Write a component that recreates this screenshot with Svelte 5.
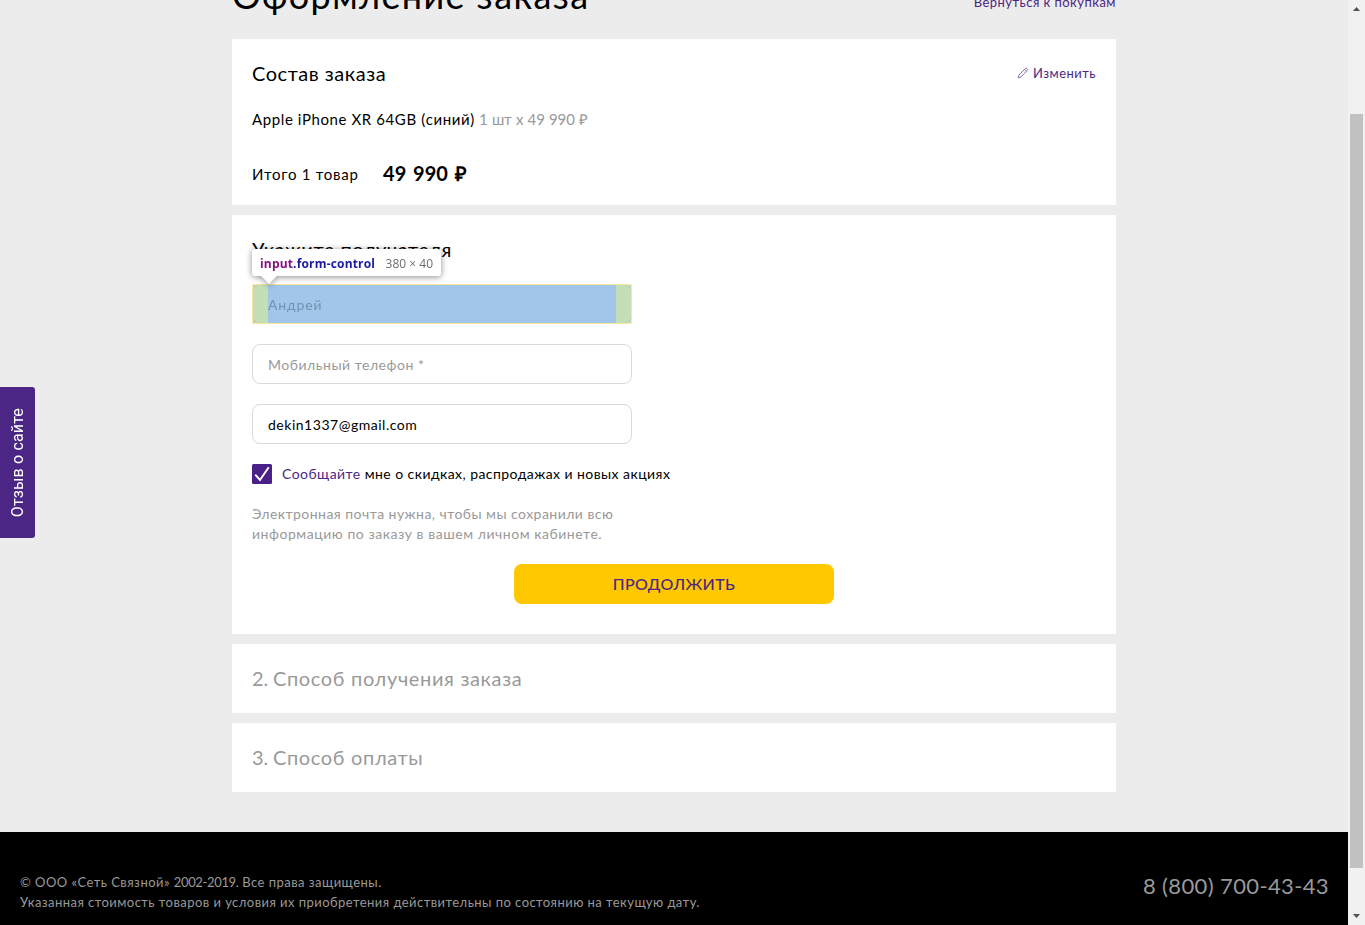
<script>
  const steps = [
    { number: '2.', title: 'Способ получения заказа' },
    { number: '3.', title: 'Способ оплаты' }
  ];
</script>

<div class="window">
  <div class="page">
    <header>
      <h1>Оформление заказа</h1>
      <a class="back" href="#cart">Вернуться к покупкам</a>
    </header>

    <main>
      <section class="card order">
        <div class="head">
          <h2>Состав заказа</h2>
          <a class="edit" href="#edit">
            <svg width="12" height="12" viewBox="0 0 12 12" fill="none" stroke="#6a4a9c" stroke-width=".8" stroke-linejoin="round">
              <path d="M1.2 10.8 1.9 8.1 8.4 1.5Q9.2.8 10.1 1.6 11 2.6 10.3 3.5L3.8 10.1ZM7.4 2.5 9.3 4.5" />
            </svg>
            <span>Изменить</span>
          </a>
        </div>
        <div class="product"><span class="name">Apple iPhone XR 64GB (синий)</span><span class="qty">1 шт x 49 990 ₽</span></div>
        <div class="total"><span class="count">Итого 1 товар</span><b>49 990 ₽</b></div>
      </section>

      <section class="card recipient">
        <h2>Укажите получателя</h2>
        <div class="fields">
          <div class="field picked">
            <span class="first">Андрей</span>
            <div class="highlight"></div>
            <div class="tip"><b class="tag">input</b><b class="cls">.form-control</b><span class="size">380 × 40</span></div>
          </div>
          <div class="field hint"><span>Мобильный телефон *</span></div>
          <div class="field"><span>dekin1337@gmail.com</span></div>
        </div>
        <div class="agree">
          <svg width="20" height="20" viewBox="0 0 20 20">
            <rect width="20" height="20" rx="1.5" fill="#4a1f87" />
            <path d="M3.2 10.7 8 16 16.7 3.2" fill="none" stroke="#fff" stroke-width="2" />
          </svg>
          <span class="say">Сообщайте</span><span class="about">мне о скидках, распродажах и новых акциях</span>
        </div>
        <p class="note">Электронная почта нужна, чтобы мы сохранили всю<br /><span>информацию по заказу в вашем личном кабинете.</span></p>
        <button>ПРОДОЛЖИТЬ</button>
      </section>

      {#each steps as step}
        <section class="card step"><h2><span class="number">{step.number}</span><span>{step.title}</span></h2></section>
      {/each}
    </main>

    <footer>
      <div class="legal">
        <div class="copy">© ООО «Сеть Связной» <span class="years">2002-2019.</span> Все права защищены.</div>
        <div>Указанная стоимость товаров и условия их приобретения действительны по состоянию на текущую дату.</div>
      </div>
      <div class="phone">8 (800) 700-43-43</div>
    </footer>
  </div>

  <div class="scrollbar">
    <svg width="7" height="4" viewBox="0 0 7 4"><path d="M0 4 3.5 0 7 4Z" fill="#505050" /></svg>
    <div class="thumb"></div>
    <svg width="7" height="4" viewBox="0 0 7 4"><path d="M0 0 3.5 4 7 0Z" fill="#505050" /></svg>
  </div>

  <div class="feedback"><span>Отзыв о сайте</span></div>
</div>

<style>
  :global(body) { margin: 0; overflow: hidden; }
  .window { position: relative; display: flex; width: 1365px; height: 925px; overflow: hidden; font: 14px/20px Lato, "Open Sans", sans-serif; letter-spacing: .46px; color: #000; background: #ececec; }
  .page { width: 1348px; display: flex; flex-direction: column; }
  h1, h2, p { margin: 0; font-weight: 400; }
  a { color: #4c2684; text-decoration: none; }
  header { width: 884px; height: 66px; margin: -27px auto 0; display: flex; justify-content: space-between; align-items: flex-start; flex: none; }
  h1 { font-size: 36px; line-height: 44px; letter-spacing: 1.4px; }
  .back { margin-top: 19px; font-size: 13px; }
  main { width: 884px; height: 793px; margin: 0 auto; display: flex; flex-direction: column; gap: 10px; flex: none; }
  .card { box-sizing: border-box; background: #fff; padding: 22px 20px 0; flex: none; }
  h2 { font-size: 20px; line-height: 24px; letter-spacing: .54px; }
  .order { height: 166px; }
  .head { display: flex; justify-content: space-between; }
  .edit { display: flex; gap: 4px; margin-top: 2px; font-size: 13px; line-height: 20px; }
  .edit svg { margin-top: 4px; }
  .product { display: flex; margin-top: 24px; font-size: 15px; white-space: pre; }
  .name { width: 227px; letter-spacing: .6px; }
  .qty { color: #999; letter-spacing: -.14px; word-spacing: .65px; }
  .total { display: flex; align-items: baseline; margin-top: 31px; line-height: 24px; }
  .count { font-size: 15px; letter-spacing: .75px; width: 131px; }
  .total b { font-size: 20px; letter-spacing: .1px; word-spacing: 1.6px; position: relative; top: 1px; }
  .recipient { height: 419px; display: flex; flex-direction: column; }
  .fields { display: flex; flex-direction: column; gap: 20px; margin-top: 23px; }
  .field { position: relative; box-sizing: border-box; width: 380px; height: 40px; border: 1px solid #d9d9d9; border-radius: 8px; padding: 0 15px; line-height: 39px; letter-spacing: .52px; }
  .hint { color: #999; }
  .picked { color: #333; }
  .picked .first { opacity: .75; }
  .first { letter-spacing: .85px; }
  .highlight { position: absolute; inset: -1px; box-sizing: border-box; border: 1px solid rgba(255, 229, 153, .85); background: linear-gradient(90deg, rgba(147, 196, 125, .55) 15px, rgba(111, 168, 220, .66) 15px, rgba(111, 168, 220, .66) 363px, rgba(147, 196, 125, .55) 363px) padding-box; }
  .tip { position: absolute; left: -1px; top: -36px; box-sizing: border-box; width: 189px; height: 27px; padding: 1px 8px 0; border-radius: 3px; background: #fff; filter: drop-shadow(0 1px 3px rgba(0, 0, 0, .45)); display: flex; font: 12px/28px "Open Sans", sans-serif; letter-spacing: 0; white-space: nowrap; }
  .tip::after { content: ""; position: absolute; left: 9px; top: 27px; border: 8px solid transparent; border-top-color: #fff; border-bottom: 0; }
  .tag { color: #881280; letter-spacing: .17px; }
  .cls { color: #1a1aa6; letter-spacing: .17px; }
  .size { color: #6e6e6e; margin-left: auto; }
  .agree { display: flex; margin-top: 20px; }
  .say { margin: 0 4px 0 10px; color: #4c2684; }
  .about { letter-spacing: .44px; }
  .note { margin-top: 20px; color: #999; }
  .note span { letter-spacing: .54px; }
  button { align-self: center; width: 320px; height: 40px; margin-top: 20px; padding: 0; border: 0; border-radius: 8px; background: #ffc800; color: #4c2684; font: 500 16px/40px Lato, sans-serif; letter-spacing: .37px; }
  .step { height: 69px; padding-top: 22px; }
  .step h2 { display: flex; color: #999; letter-spacing: .65px; }
  .number { width: 21px; letter-spacing: 0; }
  footer { flex: 1; box-sizing: border-box; padding: 40px 19px 0 20px; background: #000; color: #999; display: flex; justify-content: space-between; }
  .legal { font-size: 13px; letter-spacing: .45px; }
  .copy { letter-spacing: .46px; }
  .years { letter-spacing: -.35px; }
  .phone { font-size: 22px; line-height: 28px; letter-spacing: .37px; }
  .scrollbar { width: 17px; background: #f1f1f1; display: flex; flex-direction: column; align-items: center; box-sizing: border-box; padding: 7px 0; }
  .scrollbar svg { flex: none; }
  .thumb { width: 13px; height: 754px; margin: 103px 0 46px; background: #c1c1c1; flex: none; }
  .feedback { position: absolute; left: 0; top: 387px; width: 35px; height: 151px; background: #4c2684; border-radius: 0 3px 3px 0; display: flex; align-items: center; justify-content: center; color: #fff; font: 16px/35px Roboto, sans-serif; letter-spacing: .15px; }
  .feedback span { writing-mode: vertical-rl; transform: rotate(180deg); white-space: nowrap; }
</style>
